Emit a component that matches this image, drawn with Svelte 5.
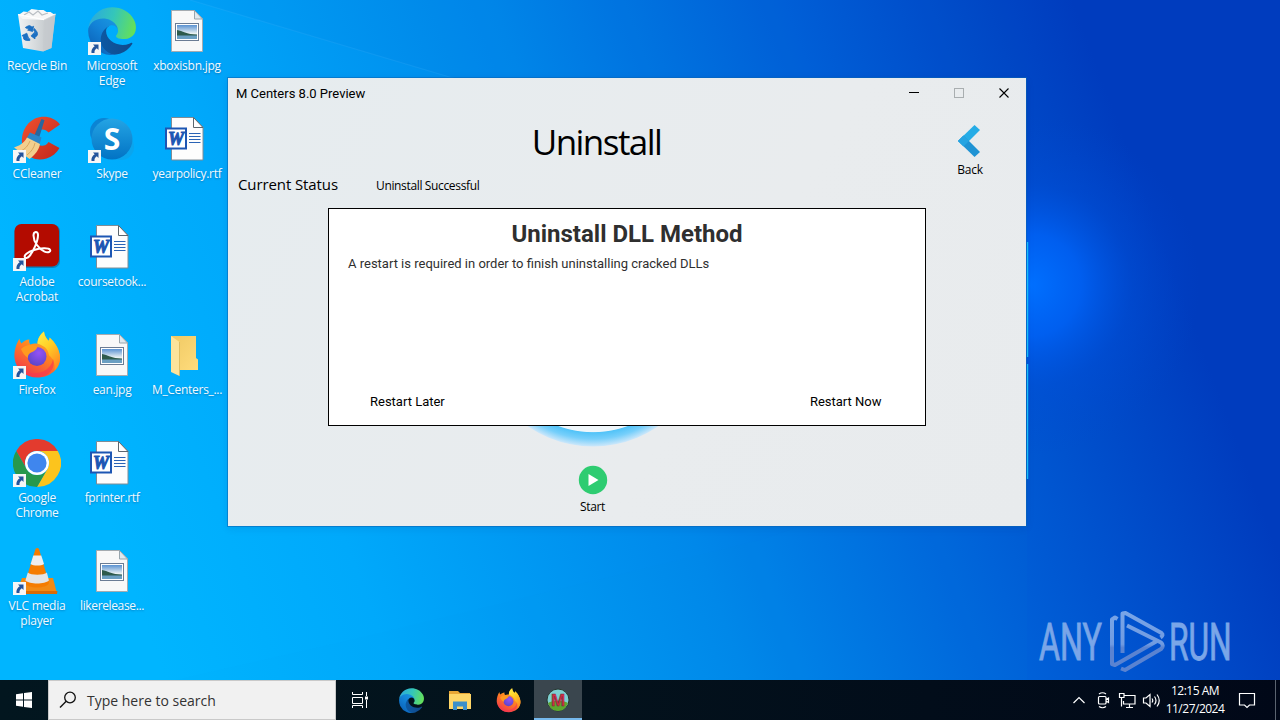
<script>
  const icons = [
    { kind: 'bin', label: 'Recycle Bin', col: 1, row: 1, ls: -0.24 },
    { kind: 'ccleaner', label: 'CCleaner', col: 1, row: 2, link: true, ls: -0.22 },
    { kind: 'acrobat', label: 'Adobe\nAcrobat', col: 1, row: 3, link: true, ls: -0.2 },
    { kind: 'firefox', label: 'Firefox', col: 1, row: 4, link: true, ls: -0.2 },
    { kind: 'chrome', label: 'Google\nChrome', col: 1, row: 5, link: true, ls: -0.3 },
    { kind: 'vlc', label: 'VLC media\nplayer', col: 1, row: 6, link: true, ls: -0.24 },
    { kind: 'edge', label: 'Microsoft\nEdge', col: 2, row: 1, link: true, ls: -0.24 },
    { kind: 'skype', label: 'Skype', col: 2, row: 2, link: true, ls: -0.3 },
    { kind: 'word', label: 'coursetook...', col: 2, row: 3, ls: -0.3 },
    { kind: 'image', label: 'ean.jpg', col: 2, row: 4, ls: -0.3 },
    { kind: 'word', label: 'fprinter.rtf', col: 2, row: 5, ls: -0.36 },
    { kind: 'image', label: 'likerelease...', col: 2, row: 6, ls: -0.36 },
    { kind: 'image', label: 'xboxisbn.jpg', col: 3, row: 1, ls: -0.24 },
    { kind: 'word', label: 'yearpolicy.rtf', col: 3, row: 2, ls: -0.3 },
    { kind: 'folder', label: 'M_Centers_...', col: 3, row: 4, ls: -0.3 }
  ];
</script>

{#snippet edgeArt()}
  <svg class="art" viewBox="4 4 257 256">
    <path fill="url(#edgeDark)" d="M235.68 195.46a93.73 93.73 0 0 1-10.54 4.71 101.87 101.87 0 0 1-35.9 6.46c-47.32 0-88.54-32.55-88.54-74.32A31.48 31.48 0 0 1 117.13 105c-42.8 1.8-53.8 46.4-53.8 72.53 0 73.88 68.09 81.37 82.76 81.37 7.91 0 19.84-2.3 27-4.56l1.31-.44a128.34 128.34 0 0 0 66.6-52.8 4 4 0 0 0-5.32-5.64Z" />
    <path fill="url(#edgeMid)" d="M110.34 246.34A79.2 79.2 0 0 1 87.6 225a80.72 80.72 0 0 1 29.53-120c3.12-1.47 8.45-4.13 15.54-4a32.35 32.35 0 0 1 25.69 13 31.88 31.88 0 0 1 6.36 18.66c0-.21 24.46-79.6-80-79.6-43.9 0-80 41.66-80 78.21a130.15 130.15 0 0 0 12.11 56 128 128 0 0 0 156.38 67.11 75.55 75.55 0 0 1-62.78-8Z" />
    <path fill="url(#edgeGreen)" d="M156.94 153.78c-.81 1.05-3.3 2.5-3.3 5.66 0 2.61 1.7 5.12 4.72 7.23 14.38 10 41.49 8.68 41.56 8.68a59.56 59.56 0 0 0 30.27-8.35A61.38 61.38 0 0 0 260.62 114.1c.26-22.41-8-37.31-11.34-43.91C228.09 28.76 182.35 4.91 132.61 4.91a128 128 0 0 0-128 126.2c.48-36.54 36.8-66.05 80-66.05 3.5 0 23.46.34 42 10.07 16.34 8.58 24.9 18.94 30.85 29.21 6.18 10.67 7.28 24.15 7.28 29.52s-2.74 13.33-7.8 19.92Z" />
  </svg>
{/snippet}

{#snippet firefoxArt()}
  <svg class="art" viewBox="0 0 48 48">
    <path fill="url(#foxBody)" d="M1.500 27C1 20 3 13 6.500 7.500c.2 2 .8 3.500 2 5C10.500 10.500 13 8.500 16.500 8.500c-.8 1.800-.3 3.500.8 5C20 12.500 22 12 24.500 12.800 24.500 8 27 3.500 31 .5c.3 4 2 6.500 4.500 9.200 1-.8 1.200-2 1-3.300C42 11 47 19 47 27 47 38 37 46.500 24.500 46.500S3 38.500 1.500 27z" />
    <path fill="url(#foxGold)" d="M31 .5c.3 4 2 6.500 4.500 9.200 1-.8 1.200-2 1-3.300C42 11 47 19 47 27c0 5-2.500 9.700-5.500 12.700 1-7-1-12-5.500-15.500-1-7-6-10-11.500-11.400C24.500 8 27 3.500 31 .5z" />
    <path fill="#f83b4e" opacity=".7" d="M4 30c3 9 11 13 20 12 9-.7 15-7 16-14 3 9-4 18-15.500 18C13 46 5 39 4 30z" />
    <circle cx="24" cy="25.500" r="9.500" fill="url(#foxCore)" />
    <path fill="#ff9a1f" d="M8 18c3-3 7-4.500 11-4 2 .2 4 .8 5.500 2-1 3-4 4.500-6.500 5.500-2 1-3.500 3-3 5.500C12 25 9.500 22 8 18z" />
  </svg>
{/snippet}

{#snippet artwork(kind)}
  {#if kind === 'edge'}
    {@render edgeArt()}
  {:else if kind === 'firefox'}
    {@render firefoxArt()}
  {:else if kind === 'bin'}
    <svg class="art" viewBox="0 0 48 48">
      <path d="M5 7.500 42.500 7 38.500 41 30 44.500 10 41z" fill="url(#binBody)" />
      <path d="M5.500 8l5-3.500 4 .5 4-3 7 1h5l3 2 4 0 4.500 3-10.500 5-22-1z" fill="#f7f7f7" />
      <path d="M11 8l5-3 4 3 5-4 4 4 6-2" fill="none" stroke="#b9bec3" stroke-width="1.200" />
      <path d="M5 7.500 31 12.500 42.500 7" fill="none" stroke="#fff" stroke-width="1.200" />
      <path d="M31 12.500 30 44.500 38.500 41 42.500 7z" fill="#c5cacd" opacity=".75" />
      <g fill="#1b6fc2" stroke="#1b6fc2" stroke-width=".8">
        <path d="M12.300 20.500l2-1.200q2.500-1.800 4.700.8l1.600-.8-1 5.200-5-1.400 1.400-1.200q-1-1.200-2-.4z" />
        <path d="M21.500 21.500l2.700 3.700q1.500 3.500-2.200 5v1.700l-4-3 3.600-3.700.2 1.700q1-.7.300-1.800l-1.600-2z" />
        <path d="M16.800 33.500h-3.300q-3.500-.4-3.200-4.100l-1.400-.8 4.900-2.400 1.700 4.900-1.600-.7q-.2 1.100.9 1.200l2 .2z" />
      </g>
    </svg>
  {:else if kind === 'ccleaner'}
    <svg class="art" viewBox="0 0 48 48">
      <path d="M47 9.500C41 2 31 0 22 3.500 12 8.500 7 20 9.500 31c3 11 14 16 24 12.500 6-2 10-5.500 13-10.500l-11-6c-2.500 4-7 5-10.500 2.500-4-3-4-9.500-.5-13 3.500-3 8-2.500 11 1z" fill="url(#ccRed)" />
      <path d="M28.500 4l3 1.200L26 23l-5-1.800z" fill="#28679f" />
      <path d="M17 17.500l11.500 5-2 7-13-6z" fill="#2b86c9" />
      <path d="M14 22.500l13 6.500C26 35 22 40 16.500 44L1 32.500C6 31 11 28 14 22.500z" fill="#f3cf8e" />
      <path d="M17 26c-2 5-5 8-9 10M22 28c-1 5-4 9-8 12" stroke="#d9a75d" fill="none" />
    </svg>
  {:else if kind === 'acrobat'}
    <svg class="art" viewBox="0 0 48 48">
      <rect x="1.500" y="1.500" width="45.500" height="43.500" rx="7" fill="#0a4d78" opacity=".45" />
      <rect x="1.500" y="1" width="44.500" height="42.500" rx="7" fill="#b30b00" />
      <path d="M12 34.500c-1.500-2 2.500-5.500 9-7.500 6-1.800 14.500-2.500 16-.2 1.200 2-2 3.400-5.500 1.800C26 26 20.500 19 20.500 12.500c0-4.500 4.500-4.800 4.500-.5 0 6.500-5 17-8.500 21-1.800 2-3.500 2.600-4.500 1.500z" fill="none" stroke="#fff" stroke-width="2" stroke-linejoin="round" />
    </svg>
  {:else if kind === 'chrome'}
    <svg class="art" viewBox="0 0 48 48">
      <path fill="#e33b2e" d="M24 12H44.800A24 24 0 0 0 3.200 12L13.600 30A12 12 0 0 1 24 12" />
      <path fill="#fcc41d" d="M44.800 12H24A12 12 0 0 1 34.400 30L24 48A24 24 0 0 0 44.800 12" />
      <path fill="#27984c" d="M24 48 34.400 30A12 12 0 0 1 13.600 30L3.200 12A24 24 0 0 0 24 48" />
      <circle cx="24" cy="24" r="12" fill="#fff" />
      <circle cx="24" cy="24" r="9.600" fill="#3f86ee" />
    </svg>
  {:else if kind === 'vlc'}
    <svg class="art" viewBox="0 0 48 48">
      <path d="M9 31h31l4 15.500H3z" fill="#f28a14" />
      <path d="M3 44h41.500l-.5 3H3z" fill="#d96b05" />
      <path d="M22.500 2c.8-1.200 2.700-1.200 3.500 0l10 34c-2 6-22 6-24 0z" fill="#f57c00" />
      <path d="M20.300 8.500h8l2.700 8.500c-3 2-10.500 2-13.400 0z" fill="#eee" />
      <path d="M14.800 25.500c3 3 16 3 19.100 0l2 8c-4 4-19.500 4-23.500 0z" fill="#e4e4e4" />
    </svg>
  {:else if kind === 'skype'}
    <svg class="art" viewBox="0 0 48 48">
      <circle cx="16" cy="17" r="14" fill="#0b84d4" />
      <circle cx="33" cy="32" r="13" fill="#0aa5ee" />
      <circle cx="24" cy="24" r="20.500" fill="url(#skypeBlue)" />
      <text x="24" y="34.500" text-anchor="middle" font-family="Open Sans, sans-serif" font-weight="700" font-size="30" fill="#fff">S</text>
    </svg>
  {:else if kind === 'word'}
    <svg class="art" viewBox="0 0 48 48">
      <path d="M8.500 2.500h22l9.500 10v32.500H8.500z" fill="#fdfdfd" stroke="#7f8c96" />
      <path d="M30.500 2.500v10H40z" fill="#fff" stroke="#5c666e" />
      <path d="M26 18.500h11.500M26 21.500h11.500M26 24.500h11.500M26 27.500h11.500" stroke="#2a63b5" stroke-width="1" />
      <rect x="3" y="13.500" width="20" height="20" fill="#fff" stroke="#1d56b3" stroke-width="2" />
      <text x="13" y="30" text-anchor="middle" font-family="Liberation Serif, serif" font-weight="700" font-style="italic" font-size="18" fill="#1d56b3" stroke="#1d56b3" stroke-width="1">W</text>
    </svg>
  {:else if kind === 'image'}
    <svg class="art" viewBox="0 0 48 48">
      <path d="M8.500 3.500h23l8 8.500v32.500h-31z" fill="#f8f8f8" stroke="#a5abb0" />
      <path d="M31.500 3.500v8.500h8z" fill="#dfe9ef" stroke="#98a5ad" />
      <rect x="12.500" y="16.500" width="23" height="17" fill="#fff" stroke="#6b7c94" />
      <rect x="14" y="18" width="20" height="14" fill="url(#photoSky)" />
      <path d="M14 23c3 .5 5 1.500 8 2.500s7 2 12 2v1.500H14z" fill="#2d5a4b" />
      <path d="M14 28.500h20V32H14z" fill="#6a9fc2" />
    </svg>
  {:else if kind === 'folder'}
    <svg class="art" viewBox="0 0 48 48">
      <path d="M8 5h25v22l2 1.500V39H10z" fill="url(#folderBack)" />
      <path d="M8 5l8.500 6v34L8 41z" fill="#fce39b" />
      <path d="M16.500 11v34" stroke="#d9b65b" stroke-width=".8" />
    </svg>
  {/if}
{/snippet}

<div class="desktop">
  <svg class="wallpaper" viewBox="0 0 1280 720" preserveAspectRatio="none">
    <defs>
      <linearGradient id="sky" gradientUnits="userSpaceOnUse" x1="120" y1="560" x2="1140" y2="180">
        <stop offset="0" stop-color="#00b5ff" /><stop offset=".2" stop-color="#00a9fb" />
        <stop offset=".5" stop-color="#0088ea" /><stop offset=".75" stop-color="#0060d8" /><stop offset="1" stop-color="#003cbe" />
      </linearGradient>
      <radialGradient id="glow" gradientUnits="userSpaceOnUse" cx="1030" cy="285" r="170">
        <stop offset="0" stop-color="#0070ff" /><stop offset=".3" stop-color="#0062f6" stop-opacity=".85" /><stop offset=".6" stop-color="#0050dc" stop-opacity=".4" /><stop offset="1" stop-color="#0048d0" stop-opacity="0" />
      </radialGradient>
      <linearGradient id="edgeDark" x1="0" x2="1"><stop offset="0" stop-color="#0c59a4" /><stop offset="1" stop-color="#114a8b" /></linearGradient>
      <linearGradient id="edgeMid" x1="1" y1="0" x2="0.300" y2="1"><stop offset="0" stop-color="#1b9de2" /><stop offset=".5" stop-color="#1383d8" /><stop offset="1" stop-color="#0b62b8" /></linearGradient>
      <linearGradient id="edgeGreen" x1="0" y1=".3" x2="1" y2=".5"><stop offset="0" stop-color="#2aa8e0" /><stop offset=".5" stop-color="#34c6ba" /><stop offset="1" stop-color="#64e05a" /></linearGradient>
      <linearGradient id="foxBody" x1=".8" y1="0" x2=".2" y2="1"><stop offset="0" stop-color="#ffcf2f" /><stop offset=".45" stop-color="#ff8420" /><stop offset="1" stop-color="#f2304f" /></linearGradient>
      <linearGradient id="foxGold" x1="0" y1="0" x2=".6" y2="1"><stop offset="0" stop-color="#fff04a" /><stop offset=".5" stop-color="#ffce25" /><stop offset="1" stop-color="#ff8f22" /></linearGradient>
      <radialGradient id="foxCore" cx=".6" cy=".3" r=".8"><stop offset="0" stop-color="#9552f5" /><stop offset="1" stop-color="#5644c4" /></radialGradient>
      <linearGradient id="binBody" x1="0" x2="1"><stop offset="0" stop-color="#f1f3f4" /><stop offset="1" stop-color="#b8bec2" /></linearGradient>
      <linearGradient id="ccRed" x1="0" x2="1" y2="1"><stop offset="0" stop-color="#f0512f" /><stop offset="1" stop-color="#c1261c" /></linearGradient>
      <linearGradient id="skypeBlue" x1="0" x2="0" y2="1"><stop offset="0" stop-color="#24a4e4" /><stop offset="1" stop-color="#0273c4" /></linearGradient>
      <linearGradient id="photoSky" x1="0" x2="0" y2="1"><stop offset="0" stop-color="#5a92d2" /><stop offset=".6" stop-color="#e8f0f2" /></linearGradient>
      <linearGradient id="folderBack" x1="0" x2="1" y2="1"><stop offset="0" stop-color="#efc964" /><stop offset="1" stop-color="#ffdc7c" /></linearGradient>
    </defs>
    <rect width="1280" height="720" fill="url(#sky)" />
    <path d="M190 0 500 92 1027 247V0z" fill="#0055c8" opacity=".05" />
    <path d="M190 0 500 92" stroke="#5cc0ff" stroke-width="1.200" opacity=".14" />
    <path d="M1027 450 760 540 350 640 0 720H1027z" fill="#0090f0" opacity=".04" />
    <rect x="800" y="60" width="480" height="460" fill="url(#glow)" />
    <path d="M1027.500 242V357M1027.500 364V479" stroke="#19c4ff" stroke-width="1.400" />
  </svg>

  <div class="icons">
    {#each icons as icon}
      <div class="item" style="grid-column:{icon.col};grid-row:{icon.row}">
        <div class="pic">
          {@render artwork(icon.kind)}
          {#if icon.link}
            <svg class="badge" viewBox="0 0 13 13">
              <rect width="13" height="13" fill="#f6f6f6" />
              <path d="M5 2.500h5.500V8L8.800 6.300C7 7.500 6.300 9 6.500 11H3.500C3 8.200 4.300 5.800 6.700 4.200z" fill="#24549c" />
            </svg>
          {/if}
        </div>
        <div class="label" style="letter-spacing:{icon.ls}px">{icon.label}</div>
      </div>
    {/each}
  </div>

  <svg class="watermark" viewBox="0 0 220 66">
    <defs>
      <linearGradient id="mark" gradientUnits="userSpaceOnUse" x1="0" y1="0" x2="0" y2="66">
        <stop offset="0" stop-color="#7aa6e8" /><stop offset=".55" stop-color="#709be1" /><stop offset=".6" stop-color="#5a83d1" /><stop offset="1" stop-color="#5a83d1" />
      </linearGradient>
    </defs>
    <g fill="url(#mark)" stroke="url(#mark)" stroke-width=".9" font-family="Roboto, sans-serif" font-size="52">
      <text transform="translate(4 52) scale(.62 1)">ANY</text>
      <text transform="translate(134 52) scale(.61 1)">RUN</text>
    </g>
    <g fill="none" stroke="url(#mark)" stroke-width="4" stroke-linejoin="round">
      <path d="M82.500 11l-2.500-1.500-3 2V56l3 1 42-24" />
      <path d="M87.500 45V5.500l3-.5 36 20q2.500 2-1 4.500" />
      <path d="M92 17.500l34 17q3.500 3 0 6.500L90 62l-4-1.500" />
    </g>
  </svg>

  <main class="window">
    <header class="titlebar">
      <span class="caption">M Centers 8.0 Preview</span>
      <svg class="controls" viewBox="0 0 135 30">
        <path d="M18 14.500h10" stroke="#000" />
        <rect x="63.500" y="10.500" width="9" height="9" fill="none" stroke="#a9aeb0" />
        <path d="M108.500 10.500l9 9M117.500 10.500l-9 9" stroke="#000" stroke-width="1.100" />
      </svg>
    </header>
    <div class="hero">
      <h1>Uninstall</h1>
      <div class="back">
        <svg viewBox="0 0 24 34">
          <path d="M17.500 1 23 6 11.500 17.500 6.500 22 1 17z" fill="#25ace6" />
          <path d="M1 17l5.500-5.500L23 28l-5.500 5z" fill="#1f93d4" />
          <path d="M1 17l5.500-5.500 5.500 5.500-5.500 5.500z" fill="#25a4e2" />
        </svg>
        <span>Back</span>
      </div>
    </div>
    <div class="status"><span class="key">Current Status</span><span class="value">Uninstall Successful</span></div>
    <div class="stage">
      <svg class="ring" viewBox="0 0 240 240">
        <defs>
          <radialGradient id="ringFade" gradientUnits="userSpaceOnUse" cx="120" cy="120" r="116">
            <stop offset=".868" stop-color="#eff6fa" /><stop offset=".876" stop-color="#52c3f8" /><stop offset=".93" stop-color="#76cffb" /><stop offset="1" stop-color="#d3e9fa" />
          </radialGradient>
        </defs>
        <circle cx="120" cy="120" r="115.500" fill="url(#ringFade)" />
      </svg>
    </div>
    <div class="start">
      <svg viewBox="0 0 30 30"><circle cx="15" cy="15" r="14.200" fill="#2ecc71" /><path d="M10.500 9v12l10-6z" fill="#fff" /></svg>
      <span>Start</span>
    </div>

    <section class="dialog">
      <h2>Uninstall DLL Method</h2>
      <p>A restart is required in order to finish uninstalling cracked DLLs</p>
      <div class="actions"><span>Restart Later</span><span>Restart Now</span></div>
    </section>
  </main>

  <footer class="taskbar">
    <div class="cell">
      <svg width="16" height="16" viewBox="0 0 16 16"><path d="M0 2.300 7 1.300V7.500H0zM8 1.100 16 0v7.500H8zM0 8.500h7v6.200L0 13.700zM8 8.500h8V16L8 14.900z" fill="#fff" /></svg>
    </div>
    <div class="search">
      <svg width="18" height="18" viewBox="0 0 18 18"><circle cx="11" cy="6.500" r="5.300" fill="none" stroke="#111" stroke-width="1.300" /><path d="M7.200 10.300 1 16.500" stroke="#111" stroke-width="1.400" /></svg>
      <span>Type here to search</span>
    </div>
    <div class="cell view">
      <svg width="18" height="16" viewBox="0 0 18 16" fill="none" stroke="#fff"><path d="M1.500 0v2.500h10V0M1.500 5.500h10v6h-10zM1.500 16v-2.500h10V16M15.500 0v4M15.500 8v8" /><path d="M14 4.500h3v3h-3z" fill="#fff" stroke="none" /></svg>
    </div>
    <div class="cell"><div class="app">{@render edgeArt()}</div></div>
    <div class="cell">
      <svg width="24" height="24" viewBox="0 0 24 24"><path d="M1 3h9l2 2h10v16H1z" fill="#e9a735" /><path d="M1 6h22v15H1z" fill="#ffd667" /><path d="M5 22v-8.500h14V22h-4v-3.500H9V22z" fill="#3c8fc9" /></svg>
    </div>
    <div class="cell"><div class="app fox">{@render firefoxArt()}</div></div>
    <div class="cell active">
      <svg width="24" height="24" viewBox="0 0 24 24">
        <circle cx="12" cy="12" r="11" fill="#7ed0d2" stroke="#27362f" />
        <path d="M2 15c5-3 15-3 20 0-2 5-5 8-10 8S3.500 20 2 15z" fill="#5ea52f" />
        <text x="12" y="17.500" text-anchor="middle" font-family="Liberation Sans, sans-serif" font-size="17" font-weight="700" fill="#d52d45" stroke="#6d2c3a" stroke-width=".5">M</text>
      </svg>
    </div>
    <div class="tray">
      <svg class="glyphs" viewBox="0 0 90 20" fill="none" stroke="#fff" stroke-width="1.200">
        <path d="M1.500 13 7 7.500 12.500 13" />
        <path d="M27.500 6.500h5.500q1 0 1 1v5.500q0 1-1 1h-5.500q-1 0-1-1V7.500q0-1 1-1zM34 9.500l2.500-1.500v4.500L34 11M27 4q3.500-2.500 7 0M27 16.500q3.500 2.500 7 0" />
        <path d="M52 5.500h11v8.500H51.500V11M57.500 14v3M54 17.500h7M47.500 3.500h4.500v4h-4.500zM49.500 7.500v9" />
        <path d="M71.500 8h2.500l4-3.500v12L74 13h-2.500zM80 8.500q1.500 2 0 4M82.500 6.500q3 4 0 8M85 4.500q4.500 6 0 12" />
      </svg>
      <div class="clock"><span>12:15 AM</span><span>11/27/2024</span></div>
      <svg class="note" viewBox="0 0 18 18" fill="none" stroke="#fff" stroke-width="1.200"><path d="M1.500 2.500h15v11.500H11.500L9 16.500 6.500 14h-5z" /></svg>
      <div class="peek"></div>
    </div>
  </footer>
</div>

<style>
  :global(body) { margin: 0; overflow: hidden; }
  .desktop { position: relative; width: 1280px; height: 720px; overflow: hidden; display: flex; flex-direction: column; justify-content: space-between; font-family: "Open Sans", "Noto Sans", sans-serif; }
  .wallpaper { position: absolute; inset: 0; width: 1280px; height: 720px; }
  svg { display: block; flex: none; }

  .icons { position: relative; display: grid; grid-template-columns: repeat(3, 74px); grid-auto-rows: 108px; column-gap: 1px; padding-top: 7px; width: max-content; }
  .item { display: flex; flex-direction: column; align-items: center; }
  .pic { position: relative; width: 48px; height: 48px; }
  .art { width: 100%; height: 100%; }
  .badge { position: absolute; left: 0; bottom: 0; width: 13px; height: 13px; }
  .label { margin-top: 3px; font-size: 12px; font-weight: 400; line-height: 15px; color: #f2faff; text-align: center; white-space: pre; text-shadow: 0 1px 2px rgba(0, 40, 90, .35); }

  .watermark { position: absolute; left: 1035px; top: 608px; width: 220px; height: 66px; }

  .window { position: absolute; left: 228px; top: 78px; width: 798px; height: 448px; box-sizing: border-box; display: flex; flex-direction: column; background: linear-gradient(120deg, #e6ecef, #e9ecee 60%, #e8ebed); outline: 1px solid rgba(10, 100, 180, .55); outline-offset: 0; box-shadow: 0 2px 8px rgba(0, 30, 90, .12); color: #000; }
  .titlebar { display: flex; justify-content: space-between; align-items: center; height: 30px; padding-left: 8px; font: 13px Roboto, sans-serif; }
  .controls { width: 135px; height: 30px; }
  .hero { display: grid; grid-template-columns: 737px 1fr; height: 62px; }
  h1 { margin: 9px 0 0; font-size: 35px; line-height: 50px; font-weight: 400; text-align: center; letter-spacing: -1.550px; }
  .back { display: flex; flex-direction: column; align-items: center; width: 40px; padding-top: 16px; margin-left: -15px; font-size: 12px; line-height: 16px; letter-spacing: -.3px; }
  .back svg { width: 24px; height: 34px; margin: 0 2px 4px 0; }
  .status { display: flex; align-items: center; height: 28px; padding: 0 0 2px 10px; }
  .key { width: 138px; font-size: 15px; font-weight: 400; letter-spacing: -.1px; }
  .value { font-size: 12px; letter-spacing: -.35px; padding-top: 2px; }
  .stage { height: 260px; padding-left: 244.500px; }
  .ring { width: 240px; height: 240px; margin-top: 11px; }
  .start { display: flex; flex-direction: column; align-items: center; width: 60px; margin-left: 334.500px; padding-top: 5px; font-size: 12px; line-height: 16px; letter-spacing: -.3px; }
  .start svg { width: 30px; height: 30px; margin-bottom: 4px; }

  .dialog { position: absolute; left: 100px; top: 130px; width: 598px; height: 218px; box-sizing: border-box; border: 1px solid #000; background: #fff; display: flex; flex-direction: column; font-family: Roboto, sans-serif; color: #2f2f2f; }
  h2 { margin: 10px 0 0; font-size: 24px; line-height: 30px; font-weight: 700; text-align: center; }
  p { margin: 7px 0 0 19px; font-size: 13px; line-height: 16px; }
  .actions { display: flex; justify-content: space-between; margin-top: auto; padding: 0 43.500px 15px 41px; font-size: 13px; line-height: 17px; color: #000; }

  .taskbar { position: relative; display: flex; height: 40px; background: linear-gradient(90deg, #02161f, #03121c 45%, #010818); }
  .cell { width: 48px; margin-right: 1px; display: flex; align-items: center; justify-content: center; }
  .cell:first-child { margin-right: 0; }
  .view { margin-right: 3px; }
  .app { width: 25px; height: 25px; }
  .fox { margin-right: 1px; }
  .active { background: #3a464e; box-shadow: inset 0 -2px #76b9ed; }
  .search { display: flex; align-items: center; width: 288px; box-sizing: border-box; padding-left: 10px; gap: 10px; background: #f1f1f1; border: 1px solid #c9c9c9; font-size: 14px; color: #333; }
  .tray { margin-left: auto; display: flex; align-items: center; }
  .glyphs { width: 90px; height: 20px; }
  .clock { width: 66px; display: flex; flex-direction: column; text-align: center; color: #fff; font-size: 12px; line-height: 18px; letter-spacing: -.5px; }
  .note { width: 18px; height: 18px; margin-left: 10px; }
  .peek { width: 4px; height: 40px; margin-left: 19px; border-left: 1px solid #5b6470; }
</style>
